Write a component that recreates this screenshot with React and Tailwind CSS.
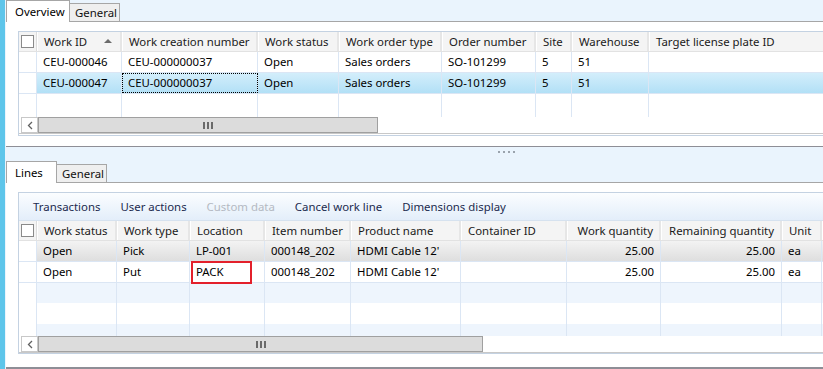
import React from "react";

const FONT = "font-['Segoe_UI','Noto_Sans',sans-serif]";

const topCols = [
  { label: "Work ID", w: 85, sort: true },
  { label: "Work creation number", w: 136 },
  { label: "Work status", w: 81 },
  { label: "Work order type", w: 103 },
  { label: "Order number", w: 94 },
  { label: "Site", w: 36 },
  { label: "Warehouse", w: 77 },
  { label: "Target license plate ID", w: 180 },
];

const topRows = [
  ["CEU-000046", "CEU-000000037", "Open", "Sales orders", "SO-101299", "5", "51", ""],
  ["CEU-000047", "CEU-000000037", "Open", "Sales orders", "SO-101299", "5", "51", ""],
];

const lineCols = [
  { label: "Work status", w: 80 },
  { label: "Work type", w: 73 },
  { label: "Location", w: 75 },
  { label: "Item number", w: 86 },
  { label: "Product name", w: 110 },
  { label: "Container ID", w: 106 },
  { label: "Work quantity", w: 94, right: true },
  { label: "Remaining quantity", w: 121, right: true },
  { label: "Unit", w: 40 },
  { label: "", w: 40 },
];

const lineRows = [
  ["Open", "Pick", "LP-001", "000148_202", "HDMI Cable 12'", "", "25.00", "25.00", "ea", ""],
  ["Open", "Put", "PACK", "000148_202", "HDMI Cable 12'", "", "25.00", "25.00", "ea", ""],
];

function Checkbox() {
  return (
    <div className="w-[18px] shrink-0 flex items-center justify-center border-r border-[#dcdcdc] bg-[#f4f4f4]">
      <div className="w-[13px] h-[13px] border border-[#8a8a8a] bg-white" />
    </div>
  );
}

function HeaderRow({ cols }) {
  return (
    <div className="flex h-[20px] border-b border-[#e2e2e2] bg-[#f4f4f4]">
      <Checkbox />
      {cols.map((c, i) => (
        <div
          key={i}
          style={{ width: c.w }}
          className={`shrink-0 relative flex items-center px-[6px] border-r-2 border-[#e6e6e6] border-l border-l-white text-[#1a1a1a] whitespace-nowrap ${c.right ? "justify-end" : ""}`}
        >
          {c.label}
          {c.sort && (
            <span className="absolute left-[66px] top-[7px] w-0 h-0 border-l-[4px] border-r-[4px] border-b-[4px] border-l-transparent border-r-transparent border-b-[#6b6b6b]" />
          )}
        </div>
      ))}
    </div>
  );
}

function DataRow({ cols, cells, rowClass, focusCol, boxCol }) {
  return (
    <div className={`flex h-[21px] border-b border-[#dbe6f4] ${rowClass}`}>
      <div className="w-[18px] shrink-0 bg-white border-r border-[#dbe6f4]" />
      {cols.map((c, i) => (
        <div
          key={i}
          style={{ width: c.w }}
          className={`shrink-0 relative flex items-center px-[6px] border-r border-[#dbe6f4] whitespace-nowrap ${c.right ? "justify-end" : ""} ${focusCol === i ? "outline-1 outline-dotted outline-black -outline-offset-1" : ""}`}
        >
          {cells[i]}
          {boxCol === i && (
            <span className="absolute left-[1px] top-[-1px] w-[61px] h-[23px] border-2 border-[#e3202b]" />
          )}
        </div>
      ))}
    </div>
  );
}

function EmptyRow({ cols, h, tint }) {
  return (
    <div className={`flex shrink-0 ${tint ? "bg-[#eef5fd]" : "bg-white"}`} style={{ height: h }}>
      <div className="w-[18px] shrink-0 bg-white border-r border-[#dbe6f4]" />
      {cols.map((c, i) => (
        <div key={i} style={{ width: c.w }} className="shrink-0 border-r border-[#dbe6f4]" />
      ))}
    </div>
  );
}

function Scrollbar({ thumb }) {
  return (
    <div className="flex h-[17px] bg-white border-b border-[#c8c8c8]">
      <div className="w-[17px] ml-[2px] shrink-0 border border-[#c8c8c8] flex items-center justify-center text-[#606060]">
        <svg width="6" height="9" viewBox="0 0 6 9">
          <path d="M5 1 L1.5 4.5 L5 8" stroke="#606060" strokeWidth="1.3" fill="none" />
        </svg>
      </div>
      <div
        style={{ width: thumb }}
        className="shrink-0 bg-[#dcdcdc] border border-[#a0a0a0] flex items-center justify-center gap-[2px]"
      >
        <span className="w-[2px] h-[7px] bg-[#6a6a6a]" />
        <span className="w-[2px] h-[7px] bg-[#6a6a6a]" />
        <span className="w-[2px] h-[7px] bg-[#6a6a6a]" />
      </div>
      <div className="flex-1" />
    </div>
  );
}

function Tabs({ first, firstW, second, secondW }) {
  return (
    <div className="flex items-end h-[22px] relative z-10 -mb-px">
      <div
        style={{ width: firstW }}
        className="h-[22px] bg-white border border-b-0 border-[#a6a6a6] flex items-center pl-[8px] text-black"
      >
        {first}
      </div>
      <div
        style={{ width: secondW }}
        className="h-[19px] bg-[#efefef] border border-l-0 border-[#a6a6a6] flex items-center pl-[5px] text-[#111]"
      >
        {second}
      </div>
    </div>
  );
}

export default function App() {
  return (
    <div className={`w-[823px] h-[369px] flex bg-[#eaf4fd] overflow-hidden text-[11.4px] ${FONT}`}>
      <div className="w-[5px] shrink-0 bg-[#5ec5ea]" />
      <div className="flex-1 flex flex-col min-w-0 pl-[1px]">
        {/* Top: Overview */}
        <Tabs first="Overview" firstW={64} second="General" secondW={50} />
        <div className="h-[126px] bg-white border-t border-[#a6a6a6] border-b border-b-[#8e8e96] pl-[12px] pt-[9px] overflow-hidden">
          <div className="border border-[#c4d2e2] border-r-0 overflow-hidden">
            <HeaderRow cols={topCols} />
            <DataRow cols={topCols} cells={topRows[0]} rowClass="bg-white" />
            <DataRow
              cols={topCols}
              cells={topRows[1]}
              rowClass="bg-gradient-to-b from-[#d3eefb] to-[#b2e0f6] border-[#9fd5f0]"
              focusCol={1}
            />
            <EmptyRow cols={topCols} h={23} />
            <Scrollbar thumb={340} />
            <div className="h-px" />
          </div>
        </div>

        {/* Splitter */}
        <div className="h-[14px] flex pt-[4px] pl-[492px]">
          <div className="flex gap-[3px]">
            {[0, 1, 2, 3].map((d) => (
              <span key={d} className="w-[2px] h-[2px] bg-[#9aa3ad]" />
            ))}
          </div>
        </div>

        {/* Bottom: Lines */}
        <Tabs first="Lines" firstW={51} second="General" secondW={50} />
        <div className="flex-1 bg-white border-t border-[#a6a6a6] border-b-2 border-b-[#8e8e96] pl-[12px] pt-[9px] overflow-hidden">
          <div className="border border-[#c4d2e2] border-r-0 overflow-hidden">
            <div className="h-[28px] flex items-center gap-[20px] pl-[14px] bg-gradient-to-b from-[#fbfdff] to-[#e3eefa] border-b border-[#d6e2ef] text-[#1b2a4e]">
              <span>Transactions</span>
              <span>User actions</span>
              <span className="text-[#b4b9c2]">Custom data</span>
              <span>Cancel work line</span>
              <span>Dimensions display</span>
            </div>
            <HeaderRow cols={lineCols} />
            <DataRow
              cols={lineCols}
              cells={lineRows[0]}
              rowClass="bg-gradient-to-b from-[#f3f3f3] to-[#dedede]"
            />
            <DataRow cols={lineCols} cells={lineRows[1]} rowClass="bg-white" boxCol={2} />
            <EmptyRow cols={lineCols} h={20} tint />
            <EmptyRow cols={lineCols} h={21} />
            <EmptyRow cols={lineCols} h={12} tint />
            <Scrollbar thumb={445} />
          </div>
        </div>
      </div>
    </div>
  );
}
